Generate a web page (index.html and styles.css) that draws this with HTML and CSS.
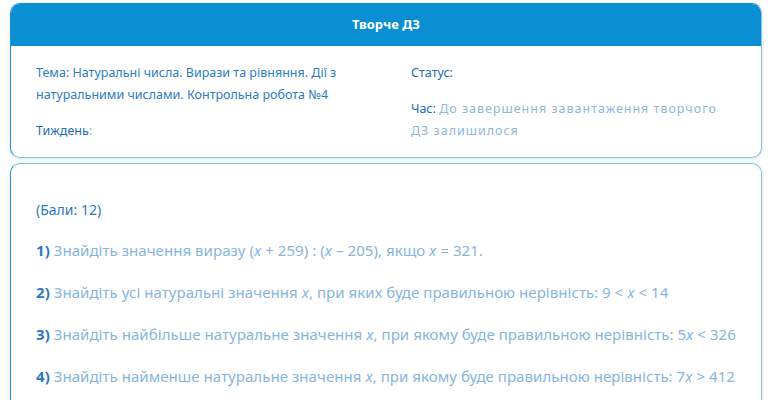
FILE: index.html
```html
<!DOCTYPE html>
<html lang="uk">
<head>
<meta charset="utf-8">
<link rel="stylesheet" href="styles.css">
</head>
<body>
<div class="card info">
  <div class="card-head">Творче ДЗ</div>
  <div class="info-body">
    <div class="col left">
      <p class="row mid">Тема: Натуральні числа. Вирази та рівняння. Дії з натуральними числами. Контрольна робота №4</p>
      <p class="row"><span class="lbl">Тиждень</span><span class="pale">:</span></p>
    </div>
    <div class="col right">
      <p class="row"><span class="lbl">Статус:</span></p>
      <p class="row"><span class="lbl">Час:</span> <span class="pale wide">До завершення завантаження творчого ДЗ залишилося</span></p>
    </div>
  </div>
</div>
<div class="card tasks">
  <p class="score">(Бали: 12)</p>
  <p class="task"><b>1)</b> Знайдіть значення виразу (<i>x</i> + 259) : (<i>x</i> – 205), якщо <i>x</i> = 321.</p>
  <p class="task"><b>2)</b> Знайдіть усі натуральні значення <i>x</i>, при яких буде правильною нерівність: 9 &lt; <i>x</i> &lt; 14</p>
  <p class="task"><b>3)</b> Знайдіть найбільше натуральне значення <i>x</i>, при якому буде правильною нерівність: 5<i>x</i> &lt; 326</p>
  <p class="task"><b>4)</b> Знайдіть найменше натуральне значення <i>x</i>, при якому буде правильною нерівність: 7<i>x</i> &gt; 412</p>
</div>
</body>
</html>
```
FILE: styles.css
```css
html, body {
  margin: 0;
  padding: 0;
  background: #ffffff;
}
body {
  padding: 3px 6px 0 10px;
  font-family: "Noto Sans", "Open Sans", sans-serif;
  overflow: hidden;
  height: 400px;
  box-sizing: border-box;
}
p { margin: 0; }
.card {
  border: 1.5px solid #7fc3e8;
  border-left-color: #1a93d6;
  border-radius: 10px;
  background: #fff;
  box-shadow: 0 1px 4px rgba(0,0,0,0.12);
}
.info {
  overflow: hidden;
  border-color: #0b8fd3 #7fc3e8 #7fc3e8 #1a93d6;
}
.card-head {
  background: #0b8fd3;
  color: #fff;
  font-weight: 700;
  font-size: 13px;
  text-align: center;
  height: 42px;
  line-height: 40px;
}
.info-body {
  display: grid;
  grid-template-columns: 375px 310px;
  padding: 16px 20px 15px 25px;
  font-size: 12.5px;
  line-height: 22px;
}
.info-body .row { margin-bottom: 14px; }
.info-body .row:last-child { margin-bottom: 0; }
.lbl { color: #1d6db6; }
.mid { color: #2c7cc2; }
.pale { color: #8db7dc; }
.wide { letter-spacing: 1px; }
.tasks {
  margin-top: 5px;
  padding: 35px 20px 40px 25px;
  font-size: 15px;
  line-height: 22px;
  color: #86b5de;
  min-height: 300px;
}
.score {
  color: #2a78c0;
  font-size: 14px;
  margin-bottom: 18px;
}
.task {
  margin-bottom: 20px;
  white-space: nowrap;
  letter-spacing: 0.05px;
}
.task b {
  color: #2a78c0;
  font-weight: 700;
}
.task i { font-style: italic; }
```
